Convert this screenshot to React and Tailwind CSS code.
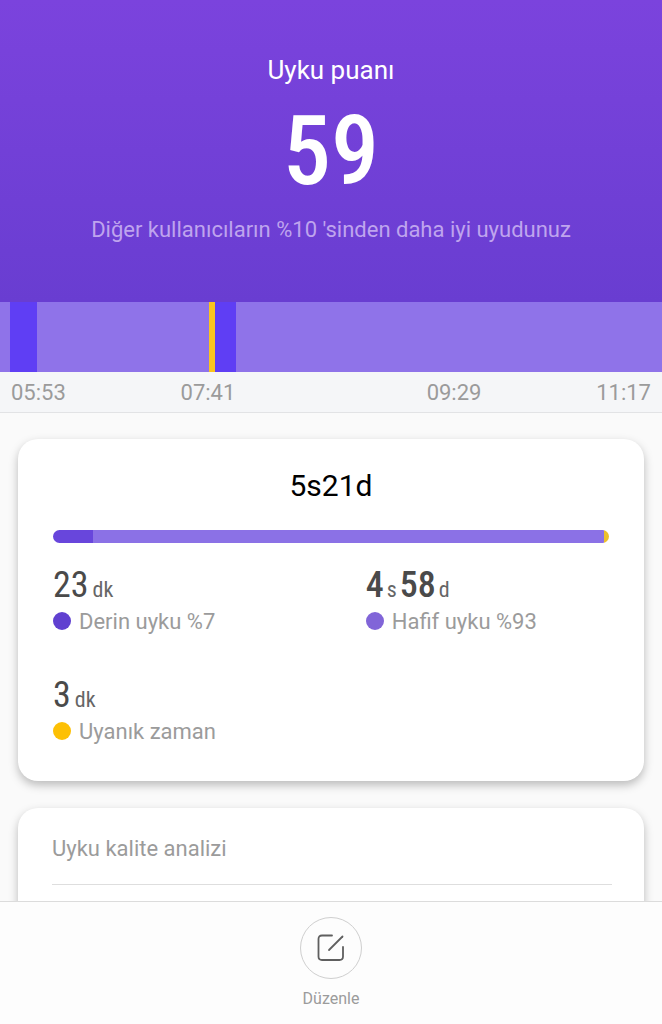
import React from 'react';

const timeline = [
    { minutes: 10, color: 'bg-[#8f73e9]' },
    { minutes: 27, color: 'bg-[#5f3ef4]' },
    { minutes: 172, color: 'bg-[#8f73e9]' },
    { minutes: 6, color: 'bg-[#fac31e]' },
    { minutes: 21, color: 'bg-[#5f3ef4]' },
    { minutes: 426, color: 'bg-[#8f73e9]' },
];

const phases = [
    { minutes: 40, color: 'bg-[#6846dc]' },
    { minutes: 511, color: 'bg-[#8b71e6]' },
    { minutes: 5, color: 'bg-[#ecc02c]' },
];

const stats = [
    { label: 'Derin uyku %7', dot: 'bg-[#6040d0]', parts: [['23', 'dk']] },
    { label: 'Hafif uyku %93', dot: 'bg-[#8165d8]', parts: [['4', 's'], ['58', 'd']], bold: true },
    { label: 'Uyanık zaman', dot: 'bg-[#fdc004]', parts: [['3', 'dk']] },
];

const Segments = ({ items, className }) => (
    <div className={'flex overflow-hidden ' + className}>
        {items.map((item, i) => (
            <div key={i} className={item.color} style={{ flexGrow: item.minutes, flexBasis: 0 }} />
        ))}
    </div>
);

const Stat = ({ label, dot, parts, bold }) => (
    <div>
        <div
            className={
                "flex h-10 items-baseline font-['Roboto_Condensed','Liberation_Sans_Narrow',sans-serif] text-[#4a4a4a] " +
                (bold ? 'gap-[3px]' : 'gap-1')
            }
        >
            {parts.map(([value, unit]) => (
                <React.Fragment key={unit}>
                    <span className={'text-4xl ' + (bold ? 'font-medium' : '')}>{value}</span>
                    <span className="text-[22px] text-[#666]">{unit}</span>
                </React.Fragment>
            ))}
        </div>
        <div className="flex h-8 items-center gap-2 text-[22px] text-[#9b9b9b]">
            <span className={'size-[18px] rounded-full ' + dot} />
            <span>{label}</span>
        </div>
    </div>
);

const EditIcon = () => (
    <svg viewBox="0 0 30 30" className="size-[30px]" fill="none" stroke="#5f5f5f" strokeWidth="1.8" strokeLinecap="round">
        <path d="M16 2.5H6Q2.5 2.5 2.5 6V23.5Q2.5 27 6 27H23.5Q27 27 27 23.5V14" />
        <path d="M13 17L26.5 3.5" />
    </svg>
);

const App = () => {
    return (
        <div className="flex h-screen flex-col bg-[#fafafa] font-['Roboto',sans-serif]">
            <main className="min-h-0 flex-1 overflow-y-auto [scrollbar-width:none]">
                <header className="flex h-[302px] flex-col items-center bg-linear-to-b from-[#7b43dd] to-[#693dd1] pt-[50px] text-center text-white">
                    <h1 className="text-[26px] leading-10">Uyku puanı</h1>
                    <p className="mt-2 font-['Roboto_Condensed','Liberation_Sans_Narrow',sans-serif] text-8xl font-medium leading-[106px]">59</p>
                    <p className="mt-[10px] text-[22px] leading-8 text-[#bfa4ee]">
                        Diğer kullanıcıların %10 'sinden daha iyi uyudunuz
                    </p>
                </header>

                <Segments items={timeline} className="h-[70px]" />
                <div className="flex h-[41px] items-center border-b border-[#e2e3e5] bg-[#f5f6f8] px-[11px] text-[22px] text-[#9b9b9b]">
                    <span>05:53</span>
                    <span className="grow-3" />
                    <span>07:41</span>
                    <span className="grow-5" />
                    <span>09:29</span>
                    <span className="grow-3" />
                    <span>11:17</span>
                </div>

                <div className="flex flex-col gap-[27px] px-[18px] pt-[26px] pb-6">
                    <section className="rounded-[20px] bg-white px-[35px] pt-[27px] pb-[34px] shadow-[0_4px_10px_rgba(0,0,0,0.26)]">
                        <h2 className="text-center text-[30px] leading-10 text-black">5s21d</h2>
                        <Segments items={phases} className="mt-6 h-[13px] rounded-full" />
                        <div className="mt-[22px] grid grid-cols-[9fr_7fr] gap-y-[38px]">
                            {stats.map((stat) => (
                                <Stat key={stat.label} {...stat} />
                            ))}
                        </div>
                    </section>

                    <section className="rounded-[20px] bg-white pt-6 pr-8 pb-16 pl-[34px] shadow-[0_4px_10px_rgba(0,0,0,0.26)]">
                        <h2 className="border-b border-[#dedede] pb-[18px] text-[22px] leading-[34px] text-[#9b9b9b]">Uyku kalite analizi</h2>
                    </section>
                </div>
            </main>

            <footer className="flex h-[123px] shrink-0 justify-center border-t border-[#dcdcdc] bg-[#fdfdfd] pt-[15px]">
                <button type="button" className="flex flex-col items-center gap-2 text-base text-[#9b9b9b]">
                    <span className="flex size-[62px] items-center justify-center rounded-full border border-[#cfcfcf]">
                        <EditIcon />
                    </span>
                    Düzenle
                </button>
            </footer>
        </div>
    );
};

export default App;
